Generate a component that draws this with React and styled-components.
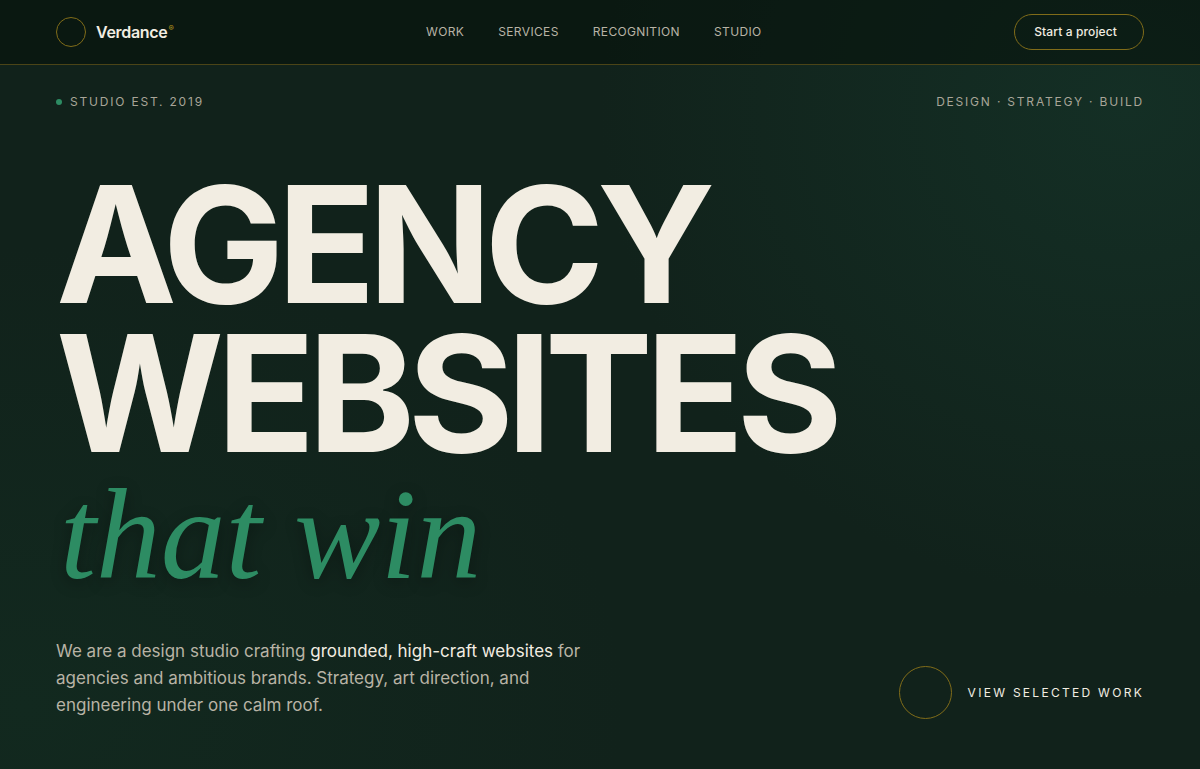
import React from 'react';
import styled, { createGlobalStyle } from 'styled-components';

const NAV_LINKS = ['Work', 'Services', 'Recognition', 'Studio'];

export default function App() {
    return (
        <>
            <GlobalStyle />
            <Page>
                <Header>
                    <Brand href="#top">
                        <BrandMark />
                        <BrandName>Verdance<sup>®</sup></BrandName>
                    </Brand>
                    <Nav aria-label="Main">
                        {NAV_LINKS.map(link => (
                            <NavLink key={link} href={`#${link.toLowerCase()}`}>{link}</NavLink>
                        ))}
                    </Nav>
                    <StartButton type="button">Start a project</StartButton>
                </Header>

                <Hero id="top">
                    <MetaRow>
                        <MetaText><Dot />Studio est. 2019</MetaText>
                        <MetaText>Design · Strategy · Build</MetaText>
                    </MetaRow>

                    <Title>
                        <TitleLine>Agency</TitleLine>
                        <TitleLine>Websites</TitleLine>
                        <TitleAccent>that win</TitleAccent>
                    </Title>

                    <HeroFooter>
                        <Intro>
                            We are a design studio crafting <strong>grounded, high-craft websites</strong> for
                            agencies and ambitious brands. Strategy, art direction, and engineering under one
                            calm roof.
                        </Intro>
                        <WorkLink href="#work">
                            <WorkCircle />
                            View selected work
                        </WorkLink>
                    </HeroFooter>
                </Hero>
            </Page>
        </>
    );
}

const GlobalStyle = createGlobalStyle`
    * {
        box-sizing: border-box;
    }

    body {
        margin: 0;
        background-color: #11221b;
        color: #f2ede2;
        font-family: Inter, sans-serif;
        -webkit-font-smoothing: antialiased;
    }

    a {
        color: inherit;
        text-decoration: none;
    }
`;

const Page = styled.div`
    min-height: 100vh;
    display: flex;
    flex-direction: column;
    background:
        radial-gradient(ellipse 44% 64% at 94% 14%, #142f25 0%, transparent 100%),
        radial-gradient(ellipse 50% 60% at 2% 92%, #12291f 0%, transparent 100%),
        #11221b;
`;

const Header = styled.header`
    display: flex;
    align-items: center;
    justify-content: space-between;
    height: 65px;
    padding: 0 56px;
    background-color: rgba(6, 18, 12, 0.6);
    border-bottom: 1px solid #4b4417;
`;

const Brand = styled.a`
    display: flex;
    align-items: center;
    gap: 10px;
`;

const BrandMark = styled.span`
    width: 30px;
    height: 30px;
    border: 1px solid #806c19;
    border-radius: 50%;
`;

const BrandName = styled.span`
    font-size: 16px;
    font-weight: 600;
    line-height: 20px;
    letter-spacing: -0.02em;

    sup {
        margin-left: 1px;
        color: #b3921c;
        font-size: 8px;
        line-height: 1;
        vertical-align: 7px;
    }
`;

const Nav = styled.nav`
    display: flex;
    gap: 34px;
    line-height: 20px;
`;

const NavLink = styled.a`
    color: #b8b3a5;
    font-size: 12px;
    letter-spacing: 0.03em;
    text-transform: uppercase;
`;

const StartButton = styled.button`
    height: 36px;
    padding: 0 26px 1px 19px;
    background: transparent;
    border: 1px solid #806c19;
    border-radius: 18px;
    color: #f2ede2;
    font-family: inherit;
    font-size: 12px;
    font-weight: 500;
    letter-spacing: 0.01em;
    cursor: pointer;
`;

const Hero = styled.main`
    flex: 1;
    display: flex;
    flex-direction: column;
    padding: 28px 56px 50px;
`;

const MetaRow = styled.div`
    display: flex;
    justify-content: space-between;
    line-height: 18px;
`;

const MetaText = styled.span`
    display: flex;
    align-items: center;
    gap: 8px;
    color: #a8a598;
    font-size: 12px;
    letter-spacing: 0.15em;
    text-transform: uppercase;
`;

const Dot = styled.span`
    width: 6px;
    height: 6px;
    background-color: #2d8c63;
    border-radius: 50%;
`;

const Title = styled.h1`
    margin: 59px 0 0;
    font-size: 13.5vw;
    font-weight: 700;
    line-height: 0.92;
    letter-spacing: -0.045em;
`;

const TitleLine = styled.span`
    display: block;
    text-transform: uppercase;
`;

const TitleAccent = styled.em`
    display: block;
    padding-left: 4px;
    color: #2d8c63;
    font-family: "Liberation Serif", serif;
    font-size: 10.8vw;
    font-style: italic;
    font-weight: 400;
    line-height: 1.03;
    letter-spacing: 0;
    text-shadow: 0 4px 16px rgba(0, 0, 0, 0.3);
`;

const HeroFooter = styled.div`
    display: flex;
    align-items: flex-end;
    justify-content: space-between;
    gap: 40px;
    margin-top: auto;
`;

const Intro = styled.p`
    max-width: 540px;
    margin: 0;
    color: #b8b3a5;
    font-size: 17px;
    line-height: 27px;

    strong {
        color: #f2ede2;
        font-weight: 400;
    }
`;

const WorkLink = styled.a`
    display: flex;
    align-items: center;
    gap: 16px;
    font-size: 12px;
    letter-spacing: 0.19em;
    text-transform: uppercase;
    white-space: nowrap;
`;

const WorkCircle = styled.span`
    width: 53px;
    height: 53px;
    border: 1px solid #806c19;
    border-radius: 50%;
`;
